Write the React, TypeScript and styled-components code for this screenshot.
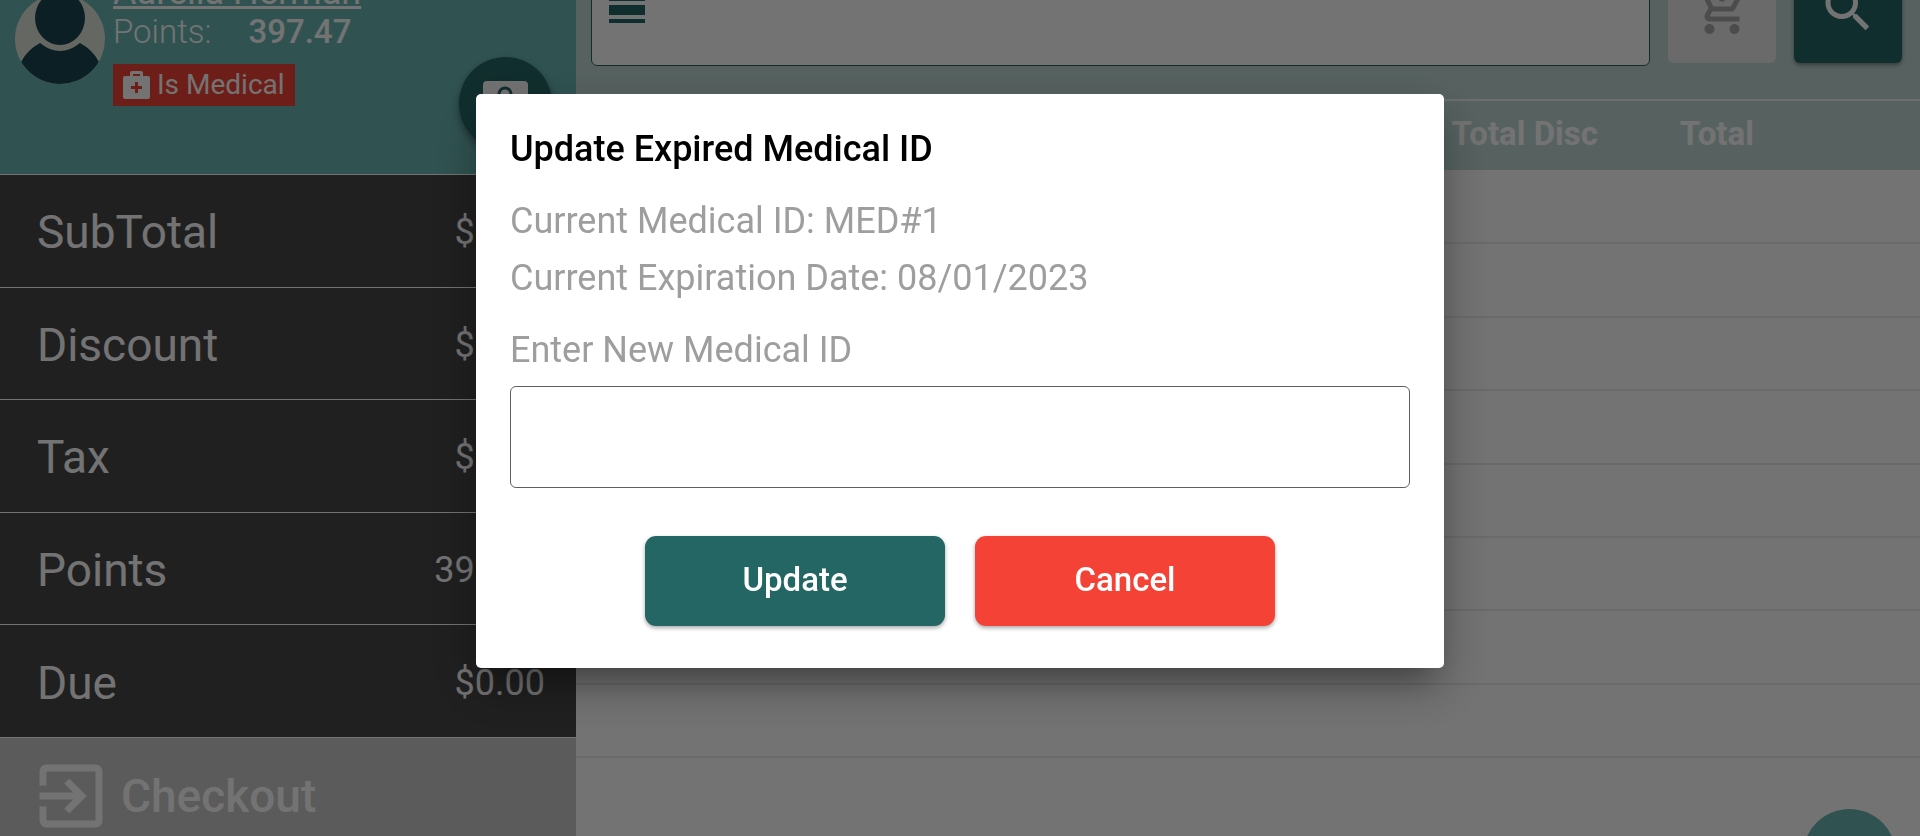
import React from "react";
import styled, { createGlobalStyle } from "styled-components";
import { MdAddShoppingCart, MdExitToApp, MdSearch } from "react-icons/md";

const Global = createGlobalStyle`
  * { box-sizing: border-box; }
  html, body, #root { height: 100%; }
  body { margin: 0; overflow: hidden; font-family: Roboto, "Liberation Sans", sans-serif; background: #fff; }
  button, input { font: inherit; border: 0; padding: 0; }
`;

const Page = styled.div`
  display: grid;
  grid-template-columns: 30% 1fr;
  height: 100vh;
  overflow: hidden;
`;

const Sidebar = styled.aside`
  position: relative;
  display: flex;
  flex-direction: column;
  min-width: 0;
  color: #fff;
`;

const Customer = styled.header`
  display: flex;
  align-items: flex-end;
  gap: 8px;
  height: 175px;
  padding: 0 24px 68px 15px;
  background: #6bb8b4;
  border-bottom: 1px solid #fff;
  overflow: hidden;
`;

const Avatar = styled.svg`
  flex: none;
  width: 90px;
  height: 90px;
  margin-bottom: 22px;
`;

const CustomerInfo = styled.div`
  display: flex;
  flex-direction: column;
  align-items: flex-start;
`;

const CustomerName = styled.a`
  color: #fff;
  font-size: 36px;
  line-height: 40px;
`;

const PointsLine = styled.div`
  display: flex;
  gap: 37px;
  font-size: 33px;
  line-height: 40px;
  font-weight: 300;
  strong { font-weight: 500; }
`;

const MedicalTag = styled.div`
  display: flex;
  align-items: center;
  gap: 7px;
  height: 42px;
  margin-top: 12px;
  padding: 0 10px;
  background: #f44336;
  font-size: 28px;
  line-height: 40px;
`;

const IdButton = styled.button`
  position: absolute;
  top: 57px;
  right: 24px;
  display: flex;
  align-items: center;
  justify-content: center;
  width: 93px;
  height: 93px;
  border-radius: 50%;
  background: #266766;
  color: #fff;
  box-shadow: 0 4px 8px rgba(0, 0, 0, 0.4);
`;

const Totals = styled.dl`
  display: grid;
  grid-auto-rows: 1fr;
  height: 563px;
  margin: 0;
  background: #474747;
`;

const TotalRow = styled.div`
  display: flex;
  align-items: center;
  justify-content: space-between;
  padding: 3px 31px 0 37px;
  border-bottom: 1px solid #fff;
  dt { font-size: 46px; line-height: 56px; }
  dd { margin: 0; font-size: 36px; line-height: 56px; }
`;

const Checkout = styled.button`
  display: flex;
  flex: 1 0 115px;
  align-items: center;
  gap: 8px;
  padding: 0 29px;
  background: #cbcbcb;
  color: #fff;
  font-size: 46px;
  font-weight: 500;
`;

const Main = styled.main`
  position: relative;
  min-width: 0;
  background: #fff;
`;

const Toolbar = styled.div`
  display: flex;
  align-items: flex-end;
  gap: 18px;
  height: 99px;
  padding: 0 18px 33px 15px;
  background: #c1dad6;
  overflow: hidden;
`;

const SearchField = styled.label`
  display: flex;
  flex: 1;
  align-items: center;
  height: 106px;
  padding: 0 17px;
  background: #fff;
  border: 1px solid #266766;
  border-radius: 6px;
  input { flex: 1; height: 60px; background: none; outline: none; }
`;

const ToolButton = styled.button<{ $muted?: boolean }>`
  display: flex;
  align-items: center;
  justify-content: center;
  width: 108px;
  height: 108px;
  margin-bottom: 3px;
  border-radius: 6px;
  background: ${(p) => (p.$muted ? "#ececec" : "#266766")};
  color: ${(p) => (p.$muted ? "#a8a8a8" : "#fff")};
  box-shadow: ${(p) => (p.$muted ? "none" : "0 2px 4px rgba(0, 0, 0, 0.4)")};
`;

const Items = styled.table`
  width: 100%;
  height: 659px;
  border-collapse: collapse;
  table-layout: fixed;
  th {
    height: 70px;
    padding: 0 0 3px 2px;
    background: #c1dad6;
    border-top: 2px solid #f0f5f4;
    color: #fff;
    font-size: 33px;
    line-height: 40px;
    font-weight: 700;
    text-align: left;
  }
  td { height: 73px; padding: 0; border-bottom: 2px solid #ebebeb; }
`;

const AddButton = styled.button`
  position: absolute;
  right: 24px;
  bottom: -49px;
  width: 93px;
  height: 93px;
  border-radius: 50%;
  background: #6bb8b4;
`;

const Backdrop = styled.div`
  position: fixed;
  inset: 0;
  display: flex;
  align-items: flex-start;
  justify-content: center;
  padding-top: 94px;
  background: rgba(0, 0, 0, 0.55);
`;

const Dialog = styled.form`
  width: 968px;
  max-width: 92vw;
  padding: 27px 34px 42px;
  border-radius: 5px;
  background: #fff;
  box-shadow: 0 22px 30px -14px rgba(0, 0, 0, 0.3), 0 18px 50px 4px rgba(0, 0, 0, 0.24);
`;

const Title = styled.h2`
  margin: 0 0 16px;
  color: #000;
  font-size: 36px;
  line-height: 56px;
  font-weight: 500;
`;

const Detail = styled.p`
  margin: 0;
  color: #9e9e9e;
  font-size: 36px;
  line-height: 57px;
`;

const FieldLabel = styled.label`
  display: block;
  margin: 15px 0 7px;
  color: #9e9e9e;
  font-size: 36px;
  line-height: 57px;
`;

const Field = styled.input`
  display: block;
  width: 100%;
  height: 102px;
  padding: 0 20px;
  border: 1px solid #5f5f5f;
  border-radius: 6px;
  background: #fff;
  font-size: 36px;
  outline: none;
`;

const Actions = styled.div`
  display: flex;
  justify-content: center;
  gap: 30px;
  margin-top: 48px;
`;

const ActionButton = styled.button<{ $danger?: boolean }>`
  width: 300px;
  height: 90px;
  padding-bottom: 3px;
  border-radius: 11px;
  background: ${(p) => (p.$danger ? "#f44336" : "#236664")};
  color: #fff;
  font-size: 33px;
  font-weight: 500;
  box-shadow: 0 2px 4px rgba(0, 0, 0, 0.35);
`;

const totals = [
  ["SubTotal", "$0.00"],
  ["Discount", "$0.00"],
  ["Tax", "$0.00"],
  ["Points", "397.47"],
  ["Due", "$0.00"],
];

export default function App() {
  return (
    <>
      <Global />
      <Page>
        <Sidebar>
          <Customer>
            <Avatar viewBox="0 0 90 90" aria-hidden="true">
              <defs><clipPath id="face"><circle cx="45" cy="45" r="45" /></clipPath></defs>
              <circle cx="45" cy="45" r="45" fill="#dde5da" />
              <g clipPath="url(#face)" fill="#1c4650">
                <ellipse cx="45" cy="24" rx="25" ry="27" />
                <path d="M25 49Q45 65 65 49Q78 56 84 68L90 92H0L6 68Q12 56 25 49Z" />
              </g>
            </Avatar>
            <CustomerInfo>
              <CustomerName href="#customer">Aurelia Herman</CustomerName>
              <PointsLine><span>Points:</span><strong>397.47</strong></PointsLine>
              <MedicalTag>
                <svg width="27" height="28" viewBox="0 0 27 28" aria-hidden="true">
                  <path fill="#fff" fillRule="evenodd" d="M7 5V2Q7 0 9 0H18Q20 0 20 2V5H25Q27 5 27 7V26Q27 28 25 28H2Q0 28 0 26V7Q0 5 2 5ZM10 5H17V3H10ZM12 11V15H8V18H12V22H15V18H19V15H15V11Z" />
                </svg>
                Is Medical
              </MedicalTag>
            </CustomerInfo>
          </Customer>
          <IdButton aria-label="Customer ID">
            <svg width="45" height="45" viewBox="0 0 45 45" aria-hidden="true">
              <rect width="45" height="45" rx="4" fill="#fff" />
              <circle cx="22" cy="13" r="6" fill="none" stroke="#266766" strokeWidth="3" />
            </svg>
          </IdButton>
          <Totals>
            {totals.map(([name, value]) => (
              <TotalRow key={name}><dt>{name}</dt><dd>{value}</dd></TotalRow>
            ))}
          </Totals>
          <Checkout><MdExitToApp size={84} />Checkout</Checkout>
        </Sidebar>
        <Main>
          <Toolbar>
            <SearchField>
              <svg width="36" height="46" viewBox="0 0 36 46" aria-hidden="true" fill="#266766">
                <path d="M0 7H36V11H0ZM0 15H36V25H0ZM0 29H36V33H0Z" />
              </svg>
              <input aria-label="Search products" />
            </SearchField>
            <ToolButton $muted aria-label="Cart"><MdAddShoppingCart size={60} /></ToolButton>
            <ToolButton aria-label="Search"><MdSearch size={60} /></ToolButton>
          </Toolbar>
          <Items>
            <colgroup><col style={{ width: "65%" }} /><col style={{ width: "17%" }} /><col /></colgroup>
            <thead><tr><th aria-label="Item" /><th>Total Disc</th><th>Total</th></tr></thead>
            <tbody>
              {Array.from({ length: 8 }, (_, i) => (
                <tr key={i}><td /><td /><td /></tr>
              ))}
            </tbody>
          </Items>
          <AddButton aria-label="Add item" />
        </Main>
      </Page>
      <Backdrop>
        <Dialog role="dialog" aria-labelledby="dialog-title" onSubmit={(e) => e.preventDefault()}>
          <Title id="dialog-title">Update Expired Medical ID</Title>
          <Detail>Current Medical ID: MED#1</Detail>
          <Detail>Current Expiration Date: 08/01/2023</Detail>
          <FieldLabel htmlFor="medical-id">Enter New Medical ID</FieldLabel>
          <Field id="medical-id" />
          <Actions>
            <ActionButton type="submit">Update</ActionButton>
            <ActionButton type="button" $danger>Cancel</ActionButton>
          </Actions>
        </Dialog>
      </Backdrop>
    </>
  );
}
